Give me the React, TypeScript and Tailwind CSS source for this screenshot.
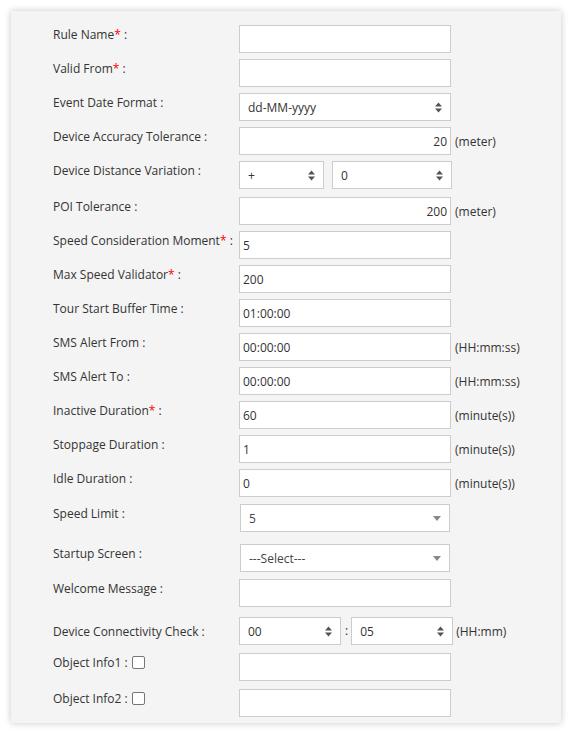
import type { ReactNode } from "react";

const font = { fontFamily: '"Open Sans", "Liberation Sans", sans-serif' };

function Req() {
  return <span className="text-[#ff0000]">*</span>;
}

function UpDown() {
  return (
    <svg width="7" height="11" viewBox="0 0 7 11" className="shrink-0">
      <path d="M3.5 0.5 L7 4.5 L0 4.5 Z" fill="#555" />
      <path d="M0 6.5 L7 6.5 L3.5 10.5 Z" fill="#555" />
    </svg>
  );
}

function Caret() {
  return (
    <svg width="8" height="5" viewBox="0 0 8 5" className="shrink-0">
      <path d="M0 0 L8 0 L4 5 Z" fill="#888" />
    </svg>
  );
}

function TextBox({ value = "", right = false }: { value?: string; right?: boolean }) {
  return (
    <div
      className={`flex h-[28px] w-[212px] items-center border border-[#ccc] bg-white px-[3px] pt-[1px] text-[12px] text-[#333] ${
        right ? "justify-end" : "justify-start"
      }`}
    >
      {value}
    </div>
  );
}

function NativeSelect({ value, width }: { value: string; width: string }) {
  return (
    <div
      className={`flex h-[28px] items-center justify-between border border-[#ccc] bg-white pl-[8px] pr-[8px] text-[12px] text-[#333] ${width}`}
    >
      <span className="pt-[1px]">{value}</span>
      <UpDown />
    </div>
  );
}

function Select2({ value }: { value: string }) {
  return (
    <div className="ml-[1px] flex h-[28px] w-[210px] items-center justify-between border border-[#ccc] bg-white pl-[8px] pr-[8px] text-[12px] text-[#444]">
      <span className="pt-[1px]">{value}</span>
      <Caret />
    </div>
  );
}

function Unit({ children, ml = "ml-[4px]" }: { children: ReactNode; ml?: string }) {
  return <span className={`${ml} pt-[1px] text-[12px] text-[#333]`}>{children}</span>;
}

function Row({
  label,
  mt,
  labelPt = "pt-[1px]",
  children,
}: {
  label: ReactNode;
  mt: string;
  labelPt?: string;
  children: ReactNode;
}) {
  return (
    <div className={`flex items-start ${mt}`}>
      <div className={`w-[186px] shrink-0 text-[12px] leading-[17px] text-[#333] ${labelPt}`}>{label}</div>
      <div className="flex items-center">{children}</div>
    </div>
  );
}

function CheckLabel({ text }: { text: string }) {
  return (
    <span className="flex items-center">
      {text}
      <span className="ml-[4px] inline-block h-[13px] w-[13px] rounded-[2px] border border-[#767676] bg-white" />
    </span>
  );
}

export default function App() {
  return (
    <div className="min-h-[734px] bg-white pl-[11px] pt-[11px]" style={font}>
      <div className="h-[712px] w-[550px] bg-[#f4f4f4] pb-[6px] pl-[42px] pt-[14px] shadow-[0_0_7px_rgba(0,0,0,0.22)]">
        <Row label={<>Rule Name<Req /> :</>} mt="mt-0">
          <TextBox />
        </Row>
        <Row label={<>Valid From<Req /> :</>} mt="mt-[6px]">
          <TextBox />
        </Row>
        <Row label="Event Date Format :" mt="mt-[6px]">
          <NativeSelect value="dd-MM-yyyy" width="w-[212px]" />
        </Row>
        <Row label="Device Accuracy Tolerance :" mt="mt-[6px]">
          <TextBox value="20" right />
          <Unit>(meter)</Unit>
        </Row>
        <Row label="Device Distance Variation :" mt="mt-[6px]">
          <NativeSelect value="+" width="w-[85px]" />
          <div className="ml-[8px]">
            <NativeSelect value="0" width="w-[120px]" />
          </div>
        </Row>
        <Row label="POI Tolerance :" mt="mt-[8px]">
          <TextBox value="200" right />
          <Unit>(meter)</Unit>
        </Row>
        <Row label={<>Speed Consideration Moment<Req /> :</>} mt="mt-[6px]">
          <TextBox value="5" />
        </Row>
        <Row label={<>Max Speed Validator<Req /> :</>} mt="mt-[6px]">
          <TextBox value="200" />
        </Row>
        <Row label="Tour Start Buffer Time :" mt="mt-[6px]">
          <TextBox value="01:00:00" />
        </Row>
        <Row label="SMS Alert From :" mt="mt-[6px]">
          <TextBox value="00:00:00" />
          <Unit>(HH:mm:ss)</Unit>
        </Row>
        <Row label="SMS Alert To :" mt="mt-[6px]">
          <TextBox value="00:00:00" />
          <Unit>(HH:mm:ss)</Unit>
        </Row>
        <Row label={<>Inactive Duration<Req /> :</>} mt="mt-[6px]">
          <TextBox value="60" />
          <Unit>(minute(s))</Unit>
        </Row>
        <Row label="Stoppage Duration :" mt="mt-[6px]">
          <TextBox value="1" />
          <Unit>(minute(s))</Unit>
        </Row>
        <Row label="Idle Duration :" mt="mt-[6px]">
          <TextBox value="0" />
          <Unit>(minute(s))</Unit>
        </Row>
        <Row label="Speed Limit :" mt="mt-[7px]">
          <Select2 value="5" />
        </Row>
        <Row label="Startup Screen :" mt="mt-[12px]">
          <Select2 value="---Select---" />
        </Row>
        <Row label="Welcome Message :" mt="mt-[7px]">
          <TextBox />
        </Row>
        <Row label="Device Connectivity Check :" mt="mt-[10px]" labelPt="pt-[6px]">
          <NativeSelect value="00" width="w-[102px]" />
          <span className="ml-[4px] mr-[3px] text-[12px] text-[#333]">:</span>
          <NativeSelect value="05" width="w-[102px]" />
          <Unit ml="ml-[3px]">(HH:mm)</Unit>
        </Row>
        <Row label={<CheckLabel text="Object Info1 :" />} mt="mt-[8px]">
          <TextBox />
        </Row>
        <Row label={<CheckLabel text="Object Info2 :" />} mt="mt-[8px]">
          <TextBox />
        </Row>
      </div>
    </div>
  );
}
